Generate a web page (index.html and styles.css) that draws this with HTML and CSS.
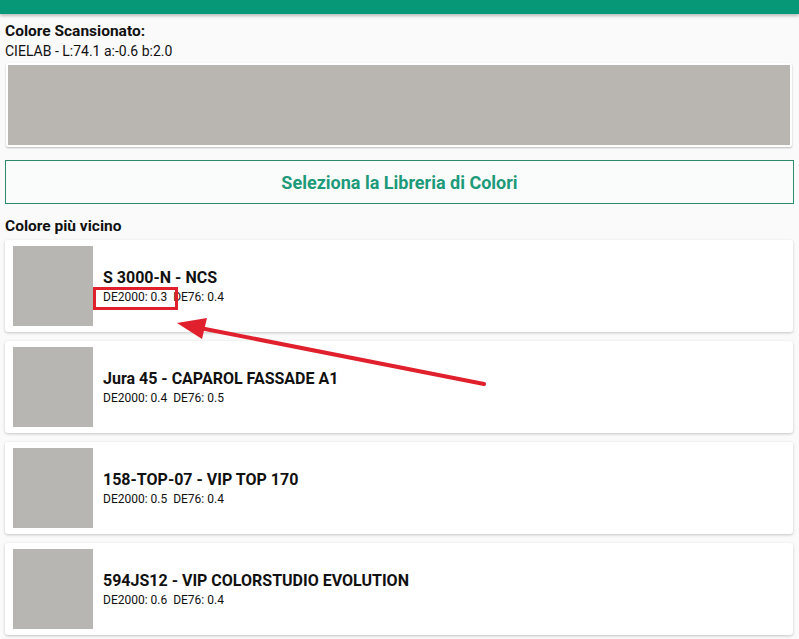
FILE: index.html
```html
<!DOCTYPE html>
<html lang="it">
<head>
<meta charset="utf-8">
<title>Colore più vicino</title>
<link rel="stylesheet" href="styles.css">
</head>
<body>
<div class="appbar"></div>
<main class="content">
  <h2 class="label label-top">Colore Scansionato:</h2>
  <div class="lab">CIELAB - L:74.1 a:-0.6 b:2.0</div>
  <div class="scan-card"><div class="scan-swatch"></div></div>
  <button class="lib-btn">Seleziona la Libreria di Colori</button>
  <h2 class="label label-near">Colore più vicino</h2>
  <ul class="results">
    <li class="card">
      <div class="swatch"></div>
      <div class="info">
        <div class="name">S 3000-N - NCS</div>
        <div class="de">DE2000: 0.3  DE76: 0.4</div>
      </div>
    </li>
    <li class="card">
      <div class="swatch"></div>
      <div class="info">
        <div class="name">Jura 45 - CAPAROL FASSADE A1</div>
        <div class="de">DE2000: 0.4  DE76: 0.5</div>
      </div>
    </li>
    <li class="card">
      <div class="swatch"></div>
      <div class="info">
        <div class="name">158-TOP-07 - VIP TOP 170</div>
        <div class="de">DE2000: 0.5  DE76: 0.4</div>
      </div>
    </li>
    <li class="card">
      <div class="swatch"></div>
      <div class="info">
        <div class="name">594JS12 - VIP COLORSTUDIO EVOLUTION</div>
        <div class="de">DE2000: 0.6  DE76: 0.4</div>
      </div>
    </li>
  </ul>
</main>
<svg class="annotation" width="799" height="639" viewBox="0 0 799 639" aria-hidden="true">
  <rect x="94.5" y="288.5" width="82" height="20" fill="none" stroke="#e0212d" stroke-width="3"/>
  <line x1="484" y1="384" x2="200" y2="328" stroke="#e0212d" stroke-width="4" stroke-linecap="round"/>
  <polygon points="177,323 207,318 202,339" fill="#e0212d"/>
</svg>
</body>
</html>
```

FILE: styles.css
```css
* { box-sizing: border-box; }
html, body { margin: 0; padding: 0; }
body {
  background: #fafafa;
  font-family: Roboto, "Liberation Sans", Arial, sans-serif;
  color: #111;
  width: 799px;
  height: 639px;
  overflow: hidden;
  position: relative;
}
.appbar {
  height: 14px;
  background: #079878;
  box-shadow: 0 2px 3px rgba(0,0,0,0.25);
}
.content {
  padding: 0 5px;
}
.label {
  margin: 0;
  font-size: 15.5px;
  font-weight: 700;
  line-height: 18px;
  color: #111;
}
.label-top { padding-top: 8px; }
.lab {
  font-size: 14px;
  line-height: 16px;
  margin-top: 3px;
  color: #111;
}
.scan-card {
  margin: 4px 2px 0 1px;
  padding: 2px;
  background: #fff;
  border-radius: 2px;
  box-shadow: 0 1px 2px rgba(0,0,0,0.25);
}
.scan-swatch {
  height: 80px;
  background: #b9b6b2;
}
.lib-btn {
  display: block;
  width: 789px;
  height: 44px;
  margin: 13px 0 0 0;
  background: #fafcfc;
  border: 1px solid #2e8b6e;
  color: #1d9a7a;
  font-family: Roboto, "Liberation Sans", Arial, sans-serif;
  font-weight: 700;
  font-size: 18px;
  padding: 0;
}
.label-near { margin-top: 13px; }
.results {
  list-style: none;
  margin: 5px 1px 0 0;
  padding: 0;
  display: flex;
  flex-direction: column;
  gap: 9px;
}
.card {
  display: flex;
  align-items: center;
  gap: 10px;
  padding: 6px 8px;
  background: #fff;
  border-radius: 3px;
  box-shadow: 0 1px 3px rgba(0,0,0,0.22);
}
.swatch {
  width: 80px;
  height: 80px;
  flex: none;
  background: #b7b6b2;
}
.info { padding-top: 1px; }
.name {
  font-size: 16px;
  font-weight: 700;
  line-height: 20px;
  color: #111;
}
.de {
  font-size: 12px;
  line-height: 16px;
  margin-top: 1px;
  white-space: pre;
  color: #111;
}
.annotation {
  position: absolute;
  left: 0;
  top: 0;
  pointer-events: none;
}
```
